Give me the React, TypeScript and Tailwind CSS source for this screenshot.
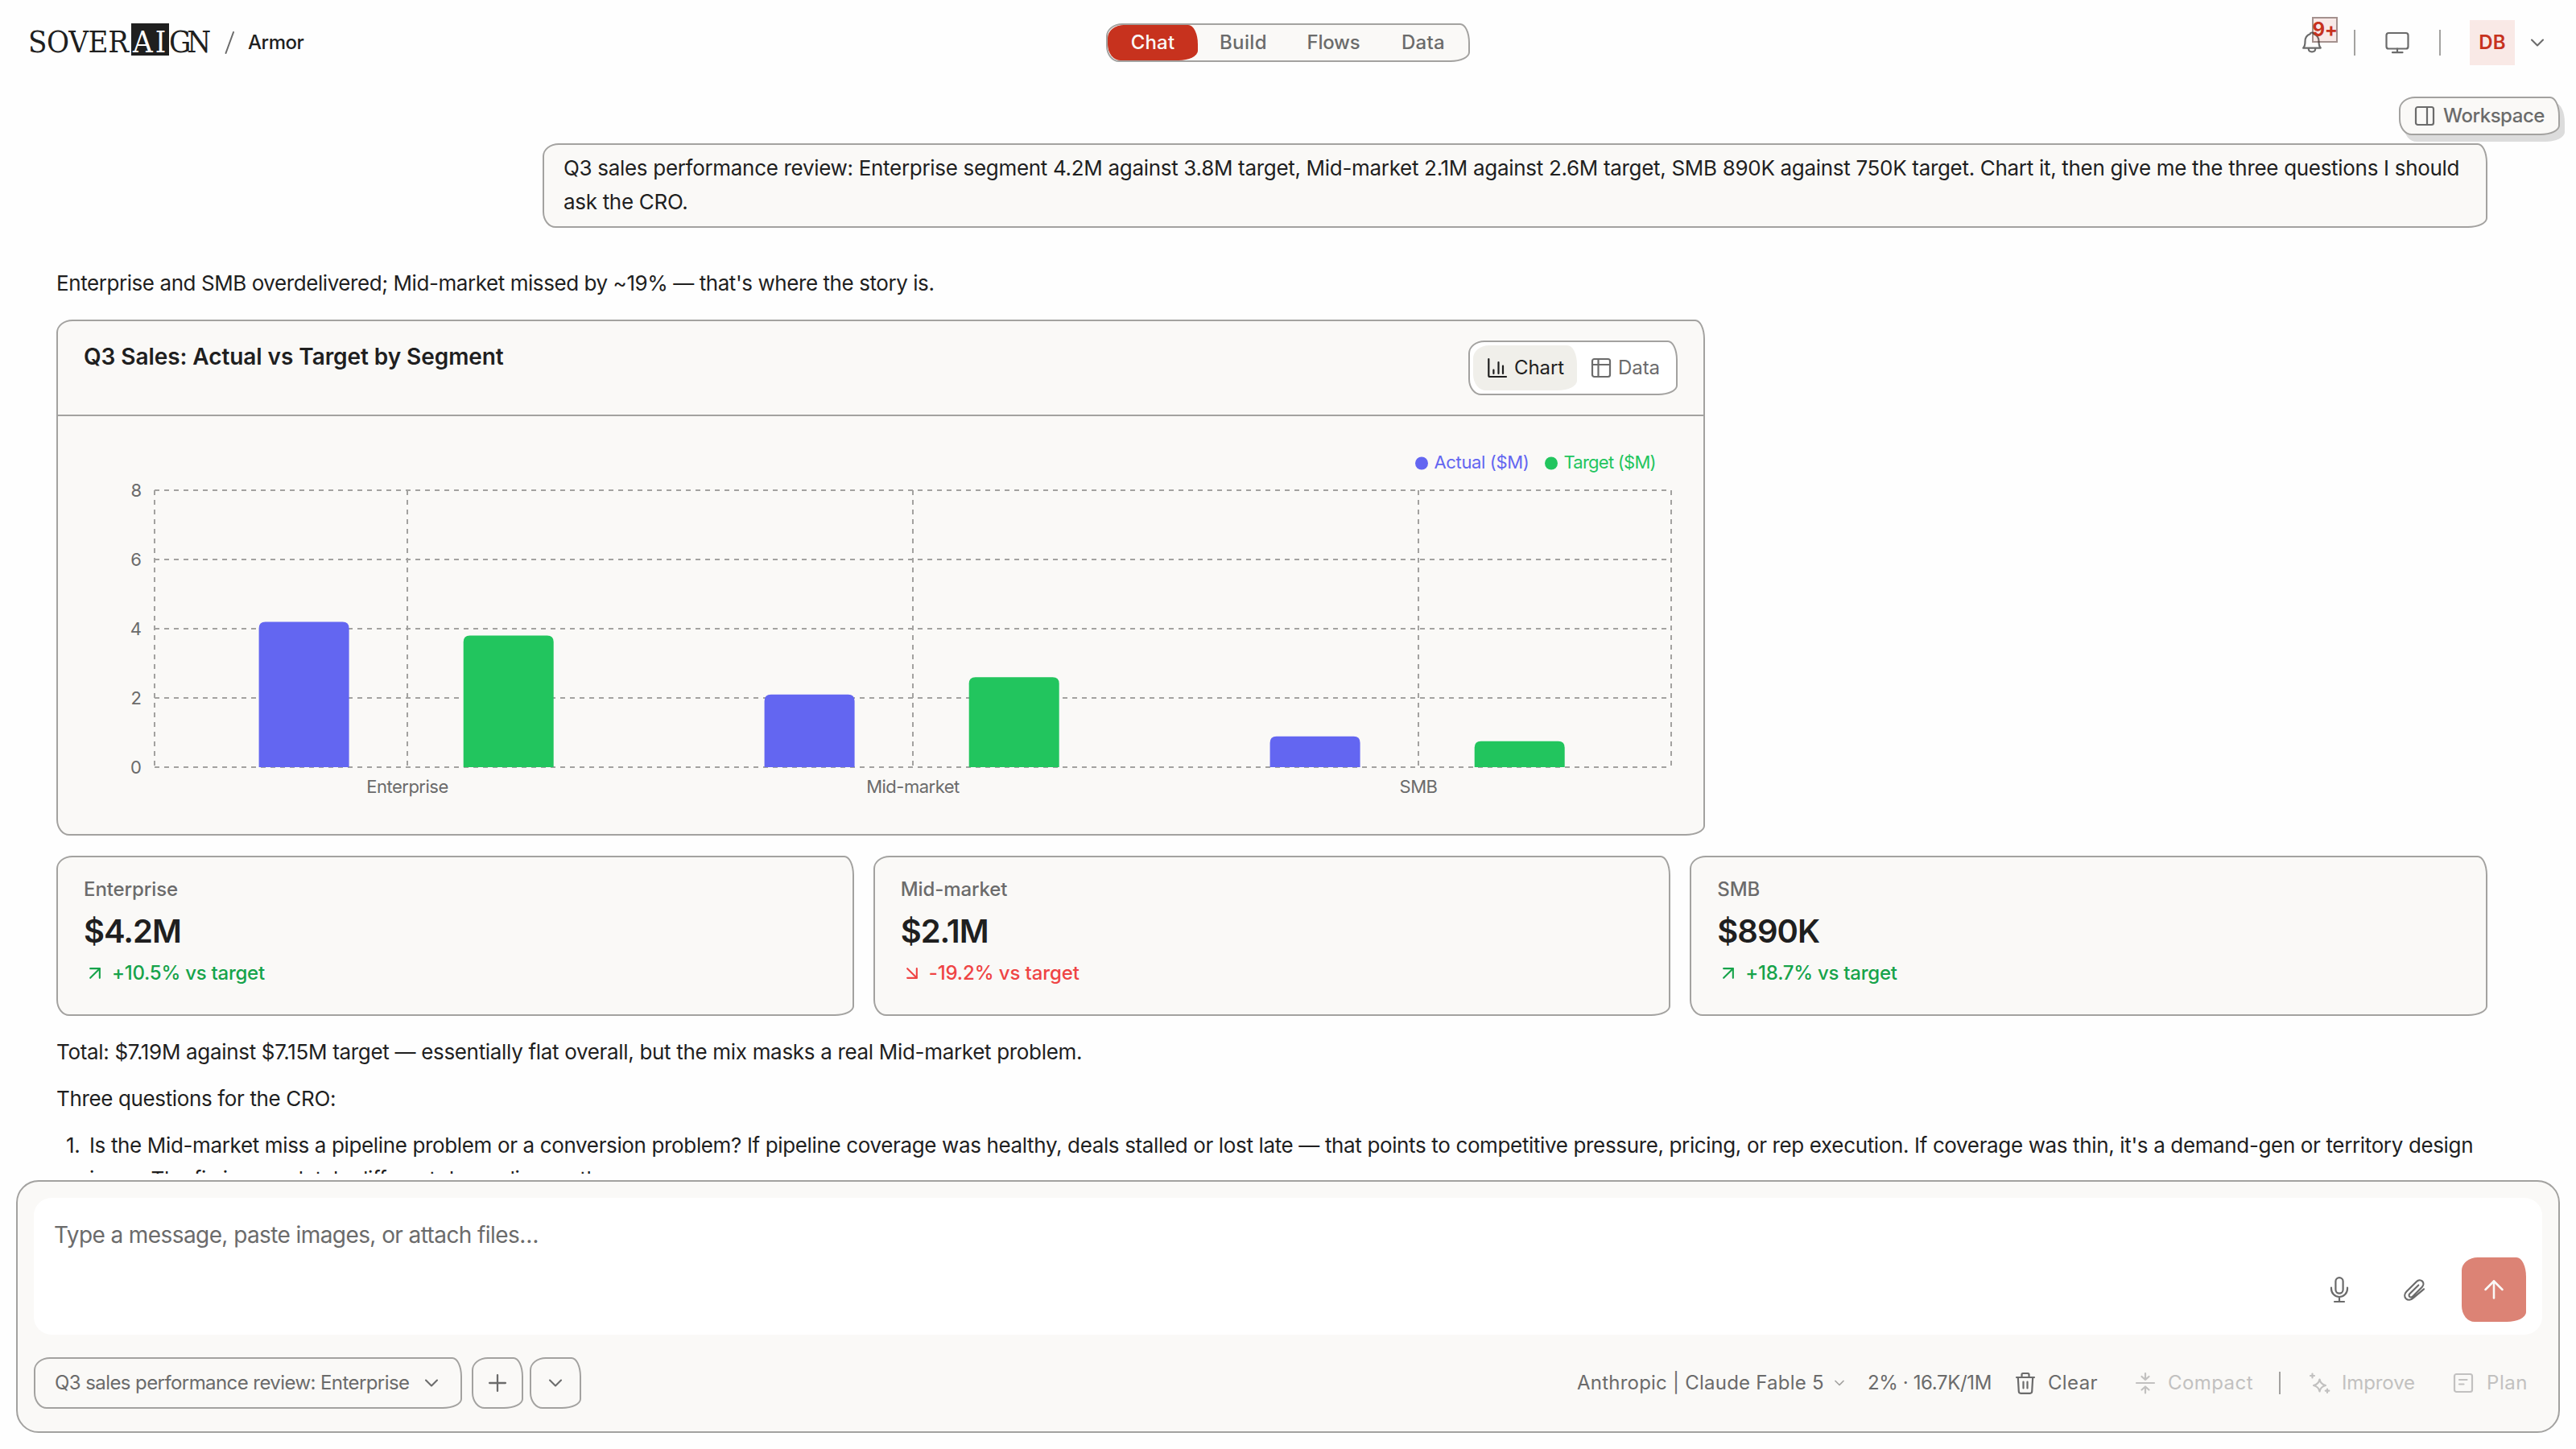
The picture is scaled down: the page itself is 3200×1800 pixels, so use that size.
import { ReactNode } from "react";
import {
  ArrowDownRight,
  ArrowUp,
  ArrowUpRight,
  ChevronDown,
  Plus,
} from "lucide-react";

type SegmentTypeface = {
  name: string;
  actual: number;
  target: number;
};

type IconTypeface = {
  width: number;
  height: number;
  className?: string;
  children: ReactNode;
};

const segments: SegmentTypeface[] = [
  { name: "Enterprise", actual: 4.2, target: 3.8 },
  { name: "Mid-market", actual: 2.1, target: 2.6 },
  { name: "SMB", actual: 0.89, target: 0.75 },
];

const ticks = [8, 6, 4, 2, 0];

// uneven corners shared by the cards, pills and buttons
const wobbly = "rounded-[20px_12px_24px_16px/16px_24px_12px_20px]";

function Icon({ width, height, className, children }: IconTypeface) {
  return (
    <svg
      width={width}
      height={height}
      viewBox={`0 0 ${width} ${height}`}
      fill="none"
      stroke="currentColor"
      strokeWidth="2.2"
      strokeLinecap="round"
      strokeLinejoin="round"
      className={`shrink-0 ${className ?? ""}`}
    >
      {children}
    </svg>
  );
}

function Logo() {
  return (
    <div className="-mt-2 flex h-10 w-[226px] items-start font-['DejaVu_Serif_Condensed','DejaVu_Serif',serif] text-[38px] leading-[47px] text-[#1f1f1f]">
      <span className="w-[128px] tracking-[-0.300px]">SOVER</span>
      <span className="h-10 w-[47px] bg-[#1f1f1f] pl-[2px] tracking-[3px] text-white">
        AI
      </span>
      <span className="tracking-[-5px]">GN</span>
    </div>
  );
}

function Header() {
  return (
    <header className="grid h-[106px] shrink-0 grid-cols-3 items-center text-[24px] font-medium text-[#6b6b6b]">
      <div className="flex items-center pl-[35px]">
        <Logo />
        <Icon width={12} height={28} className="ml-[18px]">
          <path d="M11 1L1.500 27" strokeWidth="2" />
        </Icon>
        <span className="ml-[17px] tracking-[-0.450px] text-[#1f1f1f]">
          Armor
        </span>
      </div>

      <nav
        className={`flex h-12 w-[452px] justify-self-center overflow-hidden border-2 border-[#a3a2a0] bg-[#faf9f7] text-center leading-[43px] ${wobbly}`}
      >
        <span
          className={`w-[112px] bg-[#c7321e] tracking-[0.200px] text-[#faf9f7] ${wobbly}`}
        >
          Chat
        </span>
        <span className="w-[113px] tracking-[0.370px]">Build</span>
        <span className="w-[111px] tracking-[-0.220px]">Flows</span>
        <span className="w-[112px] tracking-[0.280px]">Data</span>
      </nav>

      <div className="flex items-center justify-self-end pr-[34px]">
        <div className="relative">
          <Icon width={28} height={30}>
            <path d="M3.200 21.600h21.600c-2-2-2.300-3.800-2.300-8.100 0-5-2.700-8-6.200-9.200-.4-2.400-4.200-2.400-4.600 0C8.200 5.500 5.500 8.500 5.500 13.500c0 4.300-.3 6.100-2.300 8.100z" />
            <path d="M9.700 22.500c.5 5.200 8.100 5.200 8.600 0" />
          </Icon>
          <span className="absolute -top-[17px] left-[14px] flex h-8 w-8 items-center justify-center border-2 border-[#3f2522]/45 bg-[#c7321e]/10 font-bold tracking-[-0.500px] text-[#c7321e]">
            9+
          </span>
        </div>
        <div className="ml-[38px] h-8 w-[2px] bg-[#a3a2a0]" />
        <Icon width={32} height={30} className="ml-9">
          <rect x="2.500" y="3" width="27" height="19.500" rx="2.800" />
          <path d="M16 22.500v4.500M10 27.200h12.500" />
        </Icon>
        <div className="ml-9 h-8 w-[2px] bg-[#a3a2a0]" />
        <div className="ml-9 flex h-14 w-14 items-center justify-center bg-[#f9e9e6] font-semibold tracking-[0.200px] text-[#c7321e]">
          DB
        </div>
        <ChevronDown size={28} strokeWidth={1.800} className="ml-[14px]" />
      </div>
    </header>
  );
}

function SalesChart() {
  const left = 120;
  const right = 2004;
  const top = 92;
  const bottom = 436;
  const band = (right - left) / segments.length;
  const y = (v: number) => bottom - (v / 8) * (bottom - top);

  const bar = (x: number, v: number) =>
    `M${x} ${bottom}V${y(v) + 8}q0 -8 8 -8h96q8 0 8 8V${bottom}z`;

  return (
    <svg
      width="2044"
      height="519"
      viewBox="0 0 2044 519"
      className="block text-[22px]"
    >
      <g stroke="#a3a2a0" strokeWidth="2" strokeDasharray="6 6">
        {ticks.map((t) => (
          <line key={t} x1={left} y1={y(t)} x2={right} y2={y(t)} />
        ))}
        <line x1={left} y1={top} x2={left} y2={bottom} />
        {segments.map((s, i) => (
          <line
            key={s.name}
            x1={left + band * (i + 0.5)}
            y1={top}
            x2={left + band * (i + 0.5)}
            y2={bottom}
          />
        ))}
        <line x1={right} y1={top} x2={right} y2={bottom} />
      </g>

      {segments.map((s, i) => (
        <g key={s.name}>
          <path d={bar(left + band * i + 129.600, s.actual)} fill="#6366f1" />
          <path d={bar(left + band * i + 383.700, s.target)} fill="#22c55e" />
        </g>
      ))}

      <g fill="#6b6b6b">
        {ticks.map((t) => (
          <text key={t} x="104" y={y(t) + 8} textAnchor="end">
            {t}
          </text>
        ))}
        {segments.map((s, i) => (
          <text
            key={s.name}
            x={left + band * (i + 0.5)}
            y="468"
            textAnchor="middle"
            className="tracking-[-0.500px]"
          >
            {s.name}
          </text>
        ))}
      </g>

      <circle cx="1694" cy="58.500" r="8" fill="#6366f1" />
      <text x="1709.500" y="65" fill="#6366f1" className="tracking-[-0.350px]">
        Actual ($M)
      </text>
      <circle cx="1855" cy="58.500" r="8" fill="#22c55e" />
      <text x="1870.500" y="65" fill="#22c55e" className="tracking-[-0.750px]">
        Target ($M)
      </text>
    </svg>
  );
}

function ChartCard() {
  return (
    <section
      className={`mt-6 h-[641px] w-[2048px] border-2 border-[#a3a2a0] bg-[#faf9f7] ${wobbly}`}
    >
      <div className="flex h-[118px] items-start justify-between border-b-2 border-[#a3a2a0] pt-6 pr-8 pl-8">
        <h2 className="text-[28px] leading-10 font-semibold tracking-[-0.070px]">
          Q3 Sales: Actual vs Target by Segment
        </h2>
        <div
          className={`flex h-[68px] w-[260px] border-2 border-[#a3a2a0] bg-white p-1 text-[24px] ${wobbly}`}
        >
          <div
            className={`flex w-[129px] items-center bg-[#f0efea] pl-[17px] ${wobbly}`}
          >
            <Icon width={26} height={26}>
              <path d="M2.300 2v20.500q0 1.500 1.500 1.500H24M8.400 15.500v4.500M14.500 6v14M20 10.500v9.500" />
            </Icon>
            <span className="ml-[8px] tracking-[-0.090px]">Chart</span>
          </div>
          <div className="flex items-center pl-[17px] text-[#6b6b6b]">
            <Icon width={26} height={26}>
              <rect x="2" y="2" width="22" height="22" rx="2.500" />
              <path d="M2 9h22M9.500 2v22" />
            </Icon>
            <span className="ml-[8px] tracking-[-0.060px]">Data</span>
          </div>
        </div>
      </div>
      <SalesChart />
    </section>
  );
}

function StatCard({
  name,
  value,
  delta,
  down,
}: {
  name: string;
  value: string;
  delta: string;
  down?: boolean;
}) {
  return (
    <div
      className={`h-[199px] border-2 border-[#a3a2a0] bg-[#faf9f7] px-8 pt-6 font-medium ${wobbly}`}
    >
      <div className="text-[24px] leading-8 tracking-[-0.090px] text-[#6b6b6b]">
        {name}
      </div>
      <div className="mt-3 text-[40px] leading-[48px] font-semibold tracking-[-1px]">
        {value}
      </div>
      <div
        className={`mt-[10px] flex items-center text-[24px] leading-9 ${down ? "tracking-[-0.110px] text-[#ef4444]" : "tracking-[-0.250px] text-[#16a34a]"}`}
      >
        {down ? (
          <ArrowDownRight size={28} strokeWidth={1.800} />
        ) : (
          <ArrowUpRight size={28} strokeWidth={1.800} />
        )}
        <span className="ml-[7px]">{delta}</span>
      </div>
    </div>
  );
}

function Conversation() {
  return (
    <main className="relative h-[1352px] shrink-0 overflow-hidden px-[70px] pt-[72px] text-[26px] leading-[42px]">
      <button
        className={`absolute top-[14px] right-[20px] flex h-12 w-[200px] items-center border-2 border-[#a3a2a0] bg-[#faf9f7] pl-[17px] text-[24px] font-medium text-[#6b6b6b] shadow-[6px_8px_0_#dcdcdc] ${wobbly}`}
      >
        <Icon width={26} height={26}>
          <rect x="2" y="2" width="22" height="22" rx="2.500" />
          <path d="M16 2v22" />
        </Icon>
        <span className="ml-[10px] tracking-[-0.450px]">Workspace</span>
      </button>

      <div
        className={`mr-[40px] ml-auto h-[105px] w-[2416px] border-2 border-[#a3a2a0] bg-[#faf9f7] px-6 pt-2 tracking-[-0.310px] whitespace-nowrap ${wobbly}`}
      >
        Q3 sales performance review: Enterprise segment 4.2M against 3.8M
        target, Mid-market 2.1M against 2.6M target, SMB 890K against 750K
        target. Chart it, then give me the three questions I should
        <br />
        ask the CRO.
      </div>

      <p className="mt-12 tracking-[-0.430px]">
        Enterprise and SMB overdelivered; Mid-market missed by ~19% — that's
        where the story is.
      </p>

      <ChartCard />

      <div className="mt-[25px] mr-[40px] grid grid-cols-3 gap-6">
        <StatCard name="Enterprise" value="$4.2M" delta="+10.5% vs target" />
        <StatCard
          name="Mid-market"
          value="$2.1M"
          delta="-19.2% vs target"
          down
        />
        <StatCard name="SMB" value="$890K" delta="+18.7% vs target" />
      </div>

      <p className="mt-6 tracking-[-0.320px]">
        Total: $7.19M against $7.15M target — essentially flat overall, but the
        mix masks a real Mid-market problem.
      </p>
      <p className="mt-4 tracking-[-0.360px]">Three questions for the CRO:</p>
      <div className="mt-4 flex tracking-[-0.360px] whitespace-nowrap">
        <span className="w-[38px] pl-[12px]">1.</span>
        <p className="pl-[3px]">
          Is the Mid-market miss a pipeline problem or a conversion problem? If
          pipeline coverage was healthy, deals stalled or lost late — that
          points to competitive pressure, pricing, or rep execution. If coverage
          was thin, it's a demand-gen or territory design
          <br />
          issue. The fix is completely different depending on the answer.
        </p>
      </div>
    </main>
  );
}

function Composer() {
  return (
    <footer className="mx-5 mt-2 h-[314px] shrink-0 rounded-[28px] border-2 border-[#a3a2a0] bg-[#faf9f7] p-5 text-[24px] text-[#6b6b6b]">
      <div className="flex h-[170px] justify-between rounded-[22px] bg-white pr-5">
        <div className="pt-[26px] pl-[25px] text-[28px] leading-10 tracking-[-0.590px]">
          Type a message, paste images, or attach files…
        </div>
        <div className="flex h-20 items-center self-end mb-4">
          <Icon width={24} height={34}>
            <rect x="7.400" y="2.200" width="9.200" height="19.500" rx="4.600" />
            <path d="M2 14.500v1.500a10 10 0 0 0 20 0v-1.500M12 26.200v5.800M6 32h12" />
          </Icon>
          <Icon width={28} height={30} className="ml-[67px]">
            <path d="M19.300 9.500L8.300 20.300c-1.600 1.700-.4 4.200 1.500 4.200 1 0 1.700-.4 2.300-1L23.800 11.700c2-2.200 2.200-5.200.3-7.100-2-1.900-5-1.700-7.100.4L4.600 17.300c-3 3.100-3 6.700-.8 8.900 2.300 2.200 6 2.100 9-.8L26 14.300" />
          </Icon>
          <div
            className={`ml-[45px] flex h-20 w-20 items-center justify-center bg-[#dc8375] text-[#faf9f7] ${wobbly}`}
          >
            <ArrowUp size={36} strokeWidth={1.700} />
          </div>
        </div>
      </div>

      <div className="mt-7 flex h-16 items-center">
        <div
          className={`flex h-16 w-[532px] items-center justify-between border-2 border-[#a3a2a0] pr-[22px] pl-6 ${wobbly}`}
        >
          <span className="tracking-[-0.580px]">
            Q3 sales performance review: Enterprise
          </span>
          <ChevronDown size={28} strokeWidth={1.800} />
        </div>
        <div
          className={`ml-3 flex h-16 w-16 items-center justify-center border-2 border-[#a3a2a0] ${wobbly}`}
        >
          <Plus size={34} strokeWidth={1.600} />
        </div>
        <div
          className={`ml-2 flex h-16 w-16 items-center justify-center border-2 border-[#a3a2a0] ${wobbly}`}
        >
          <ChevronDown size={28} strokeWidth={1.800} />
        </div>

        <div className="ml-auto flex items-center pr-[18px]">
          <span className="w-[316px] tracking-[0.230px]">
            Anthropic | Claude Fable 5
          </span>
          <ChevronDown size={20} strokeWidth={2} className="text-[#a3a2a0]" />
          <span className="ml-[25px] w-[183px] tracking-[-0.370px]">
            2% · 16.7K/1M
          </span>
          <Icon width={26} height={30}>
            <path d="M2 8h22M8.500 8V4.500q0-1.500 1.500-1.500h6q1.500 0 1.500 1.500V8M3.800 8l1 17.500q.2 2.300 2.400 2.300h11.600q2.200 0 2.400-2.300L22.200 8M10.500 13.500v8M15.500 13.500v8" />
          </Icon>
          <span className="ml-[15px] w-[109px] tracking-[0.380px]">Clear</span>
          <div className="flex items-center text-[#c2c1c0]">
            <Icon width={26} height={28} className="-ml-px">
              <path d="M2 14h22M13 2v7.500M8.500 6l4.500 4 4.500-4M13 26.500v-7.500M8.500 22.500l4.500-4 4.500 4" />
            </Icon>
            <span className="ml-[15px] tracking-[0.440px]">Compact</span>
            <div className="ml-[32px] h-7 w-[2px] bg-[#a3a2a0]" />
            <Icon width={28} height={28} className="ml-[35px]">
              <path d="M13.500 9.500q1.200 6 7.500 7.500-6.300 1.500-7.500 7.500-1.200-6-7.500-7.500 6.300-1.500 7.500-7.500zM4.500 2.500v5M2 5h5M23 21.500v4.500M20.800 23.700h4.500" />
            </Icon>
            <span className="ml-[13px] tracking-[-0.100px]">Improve</span>
            <Icon width={26} height={26} className="ml-[47px]">
              <rect x="2" y="2" width="22" height="22" rx="2.500" />
              <path d="M8 9h9.500M8 14.500h5.500" />
            </Icon>
            <span className="ml-[16px] tracking-[0.550px]">Plan</span>
          </div>
        </div>
      </div>
    </footer>
  );
}

export default function App() {
  return (
    <div className="flex h-[1800px] w-[3200px] flex-col overflow-hidden bg-[#fefefe] font-['Inter',sans-serif] text-[#1f1f1f]">
      <Header />
      <Conversation />
      <Composer />
    </div>
  );
}
